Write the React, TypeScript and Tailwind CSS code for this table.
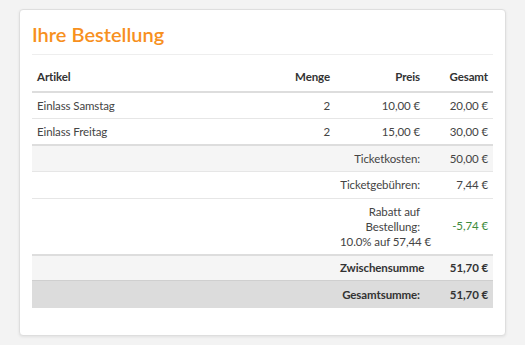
const items = [
  { name: "Einlass Samstag", qty: 2, price: "10,00 €", total: "20,00 €" },
  { name: "Einlass Freitag", qty: 2, price: "15,00 €", total: "30,00 €" },
];

export default function App() {
  return (
    <div className="min-h-[345px] w-[525px] bg-[#f3f3f3] pt-[9px] pl-[19px] font-['Lato',sans-serif] text-[11.5px] tracking-[-0.1px] text-[#444]">
      <div className="w-[487px] h-[327px] rounded-[4px] border border-[#dedede] bg-white px-[12px] shadow-[0_1px_3px_rgba(0,0,0,0.08)]">
        <h1 className="pt-[12px] pb-[7px] text-[20px] leading-[25px] font-semibold tracking-normal text-[#f7901e]">Ihre Bestellung</h1>
        <div className="border-t border-[#eeeeee]" />
        <table className="mt-[8px] w-[461px] border-collapse table-fixed">
          <colgroup>
            <col className="w-[223px]" />
            <col className="w-[80px]" />
            <col className="w-[90px]" />
            <col className="w-[68px]" />
          </colgroup>
          <thead>
            <tr className="h-[29px] border-b-2 border-[#dddddd] font-bold text-[#333]">
              <th className="px-[5px] text-left">Artikel</th>
              <th className="px-[5px] text-right">Menge</th>
              <th className="px-[5px] text-right">Preis</th>
              <th className="px-[5px] text-right">Gesamt</th>
            </tr>
          </thead>
          <tbody>
            {items.map((it, i) => (
              <tr key={it.name} className={i === 0 ? "h-[26px] border-b border-[#e6e6e6]" : "h-[27px]"}>
                <td className="px-[5px]">{it.name}</td>
                <td className="px-[5px] text-right">{it.qty}</td>
                <td className="px-[5px] text-right">{it.price}</td>
                <td className="px-[5px] text-right">{it.total}</td>
              </tr>
            ))}
            <tr className="h-[26px] border-t-2 border-[#dddddd] bg-[#f5f5f5]">
              <td colSpan={2} />
              <td className="px-[5px] text-right">Ticketkosten:</td>
              <td className="px-[5px] text-right">50,00 €</td>
            </tr>
            <tr className="h-[27px] border-t border-[#e6e6e6]">
              <td colSpan={2} />
              <td className="px-[5px] text-right">Ticketgebühren:</td>
              <td className="px-[5px] text-right">7,44 €</td>
            </tr>
            <tr className="border-t border-[#e6e6e6]">
              <td colSpan={2} />
              <td className="px-[5px] py-[5px] text-right leading-[15px] whitespace-nowrap">
                Rabatt auf
                <br />
                Bestellung:
                <br />
                10.0% auf 57,44 €
              </td>
              <td className="px-[5px] text-right text-[#3d8b3d]">-5,74 €</td>
            </tr>
            <tr className="h-[26px] border-t-2 border-[#dddddd] bg-[#f5f5f5] font-bold text-[#333]">
              <td colSpan={2} />
              <td className="px-[5px] text-right">Zwischensumme</td>
              <td className="px-[5px] text-right">51,70 €</td>
            </tr>
            <tr className="h-[27px] border-t border-[#cfcfcf] bg-[#dcdcdc] font-bold text-[#333]">
              <td colSpan={2} />
              <td className="px-[5px] text-right">Gesamtsumme:</td>
              <td className="px-[5px] text-right">51,70 €</td>
            </tr>
          </tbody>
        </table>
      </div>
    </div>
  );
}
